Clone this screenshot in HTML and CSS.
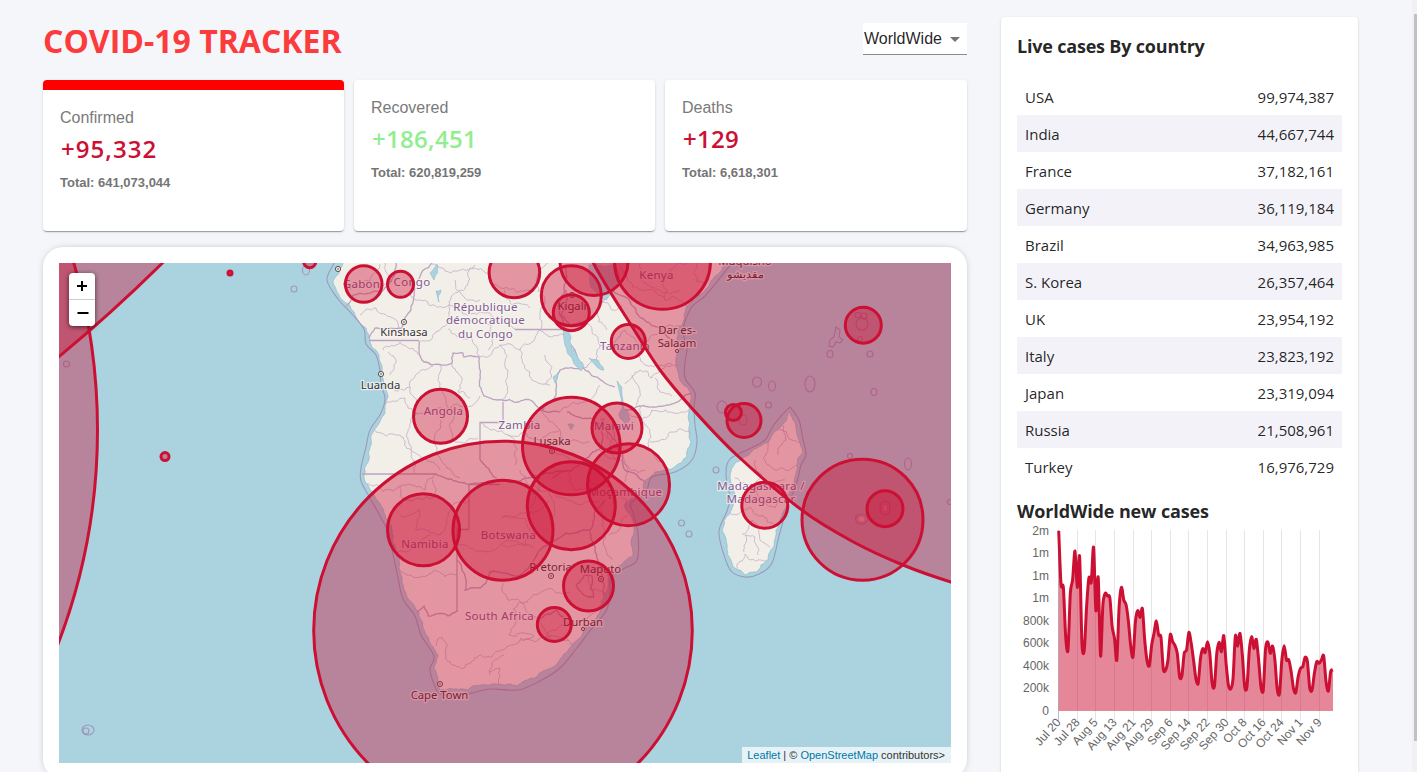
FILE: index.html
```html
<!DOCTYPE html>
<html lang="en">
<head>
<meta charset="utf-8">
<title>COVID-19 Tracker</title>
<link rel="stylesheet" href="styles.css">
</head>
<body>
<div class="app">
  <main class="left">
    <header class="header">
      <h1 class="title">COVID-19 TRACKER</h1>
      <div class="select"><span>WorldWide</span><svg class="caret" viewBox="0 0 24 24"><path d="M7 10l5 5 5-5z"/></svg></div>
    </header>
    <section class="stats">
      <div class="card stat stat-active"><p class="stat-label">Confirmed</p><p class="stat-num wide">+95,332</p><p class="stat-total">Total: 641,073,044</p></div>
      <div class="card stat"><p class="stat-label">Recovered</p><p class="stat-num green">+186,451</p><p class="stat-total">Total: 620,819,259</p></div>
      <div class="card stat"><p class="stat-label">Deaths</p><p class="stat-num">+129</p><p class="stat-total">Total: 6,618,301</p></div>
    </section>
    <section class="map-card">
      <div class="map">
        <svg id="map" class="map-svg" viewBox="59 263 892 500"></svg>
        <div class="zoom"><span class="zoom-btn"><svg viewBox="0 0 26 26"><path d="M8 13h10M13 8v10"/></svg></span><span class="zoom-btn"><svg viewBox="0 0 26 26"><path d="M8.500 13h11"/></svg></span></div>
        <div class="attribution"><a>Leaflet</a> | © <a>OpenStreetMap</a> contributors&gt;</div>
      </div>
    </section>
  </main>
  <aside class="card side">
    <h3 class="side-title">Live cases By country</h3>
    <div class="table">
      <div class="row"><span>USA</span><span>99,974,387</span></div>
      <div class="row"><span>India</span><span>44,667,744</span></div>
      <div class="row"><span>France</span><span>37,182,161</span></div>
      <div class="row"><span>Germany</span><span>36,119,184</span></div>
      <div class="row"><span>Brazil</span><span>34,963,985</span></div>
      <div class="row"><span>S. Korea</span><span>26,357,464</span></div>
      <div class="row"><span>UK</span><span>23,954,192</span></div>
      <div class="row"><span>Italy</span><span>23,823,192</span></div>
      <div class="row"><span>Japan</span><span>23,319,094</span></div>
      <div class="row"><span>Russia</span><span>21,508,961</span></div>
      <div class="row"><span>Turkey</span><span>16,976,729</span></div>
    </div>
    <h3 class="side-title chart-title">WorldWide new cases</h3>
    <svg id="chart" class="chart" viewBox="1017 524 325 236"></svg>
  </aside>
  <div class="scrollbar"><div class="thumb"></div></div>
</div>
<script src="app.js"></script>
</body>
</html>
```
FILE: styles.css
```css
* { box-sizing: border-box; }
html, body { margin: 0; height: 100%; overflow: hidden; }
body { background: #f5f6fa; font-family: "Open Sans", "Noto Sans", sans-serif; color: rgba(0,0,0,.87); }
p, h1, h3 { margin: 0; }
.app { position: relative; display: flex; align-items: flex-start; gap: 34px; height: 772px; padding: 17px 0 0 43px; overflow: hidden; }
.left { width: 924px; flex: none; }
.header { display: flex; justify-content: space-between; height: 63px; padding-top: 6px; }
.title { font-size: 32px; line-height: 35px; font-weight: 700; color: #fc3c3c; letter-spacing: 0; white-space: nowrap; }
.select { display: flex; align-items: center; width: 104px; height: 32px; padding-left: 1px; background: #fff; border-bottom: 1px solid #8b8b8d; font: 16px "Liberation Sans", Arial, sans-serif; white-space: nowrap; }
.caret { width: 24px; height: 24px; margin-left: 1px; fill: #757575; }
.card { background: #fff; border-radius: 4px; box-shadow: 0 2px 1px -1px rgba(0,0,0,.2), 0 1px 1px rgba(0,0,0,.14), 0 1px 3px rgba(0,0,0,.12); }
.stats { display: grid; grid-template-columns: 301px 301px 302px; gap: 10px; }
.stat { height: 151px; padding: 16px 16px 16px 17px; white-space: nowrap; overflow: hidden; }
.stat-active { border-top: 10px solid red; }
.stat-label { font: 16px/24px "Liberation Sans", Arial, sans-serif; color: #7a7a7a; }
.stat-num { margin: 3px 0 0 1px; font-size: 24px; font-weight: 600; line-height: 32px; color: #cc1034; letter-spacing: .3px; }
.wide { letter-spacing: 1.05px; }
.green { color: #90ee90; }
.stat-total { margin-top: 9px; font: bold 13px/18px "Liberation Sans", Arial, sans-serif; color: #757575; }
.map-card { margin-top: 16px; height: 532px; padding: 16px; background: #fff; border-radius: 20px; box-shadow: 0 0 8px -4px rgba(0,0,0,.5); }
.map { position: relative; height: 500px; overflow: hidden; background: #aad3df; }
.map-svg { display: block; width: 892px; height: 500px; font-family: "Noto Sans", sans-serif; }
.land { fill: #f2efe9; stroke: #8fb9c8; stroke-width: .7; }
.sea-limit { fill: none; stroke: #9a86b0; stroke-width: 1.1; opacity: .75; }
.border { fill: none; stroke: #bda3c1; stroke-width: 1.3; }
.region { fill: none; stroke: #c3adc7; stroke-width: .8; }
.lake { fill: #aad3df; stroke: #8aafc8; stroke-width: .5; }
.label { text-anchor: middle; font-size: 11.5px; fill: #815b8d; stroke: #f8f5f4; stroke-width: 2.5px; stroke-opacity: .75; stroke-linejoin: round; paint-order: stroke; letter-spacing: .3px; }
.city { font-size: 11.3px; fill: #333; letter-spacing: 0; }
.place { fill: #f2efe9; stroke: #444; stroke-width: .9; }
.bubble { fill: #cc1034; fill-opacity: .4; stroke: #cc1034; stroke-width: 3; }
.zoom { position: absolute; left: 10px; top: 10px; width: 26px; border-radius: 4px; background: #fff; box-shadow: 0 1px 5px rgba(0,0,0,.65); }
.zoom-btn { display: block; height: 26px; }
.zoom-btn + .zoom-btn { height: 27px; border-top: 1px solid #ccc; }
.zoom-btn svg { display: block; width: 26px; height: 26px; fill: none; stroke: #000; stroke-width: 2; }
.attribution { position: absolute; right: 0; bottom: 0; height: 16px; padding: 0 6px 0 5px; background: rgba(255,255,255,.7); font: 11px/16px "Liberation Sans", Arial, sans-serif; color: #333; white-space: nowrap; }
.attribution a { color: #0078a8; }
.side { width: 357px; height: 800px; padding: 16px; flex: none; }
.side-title { font-size: 18px; line-height: 26px; font-weight: 700; white-space: nowrap; letter-spacing: -.2px; }
.table { margin-top: 20px; }
.row { display: flex; justify-content: space-between; align-items: center; height: 37px; padding: 0 8px; font-size: 15px; line-height: 20px; }
.row:nth-child(even) { background: #f3f2f8; }
.table { margin-top: 19px; }
.chart-title { margin-top: 13px; height: 26px; letter-spacing: -.13px; }
.chart { display: block; width: 325px; height: 236px; font: 12px "Liberation Sans", Arial, sans-serif; fill: #666; }
.grid { stroke: rgba(0,0,0,.1); stroke-width: 1; }
.axis { stroke: rgba(0,0,0,.25); stroke-width: 1; }
.area { fill: rgba(204,16,52,.5); }
.line { fill: none; stroke: #cc1034; stroke-width: 3; stroke-linejoin: round; }
.end { text-anchor: end; }
.scrollbar { position: absolute; right: 0; top: 0; width: 5px; height: 772px; padding: 14px 0 0 2px; background: #f1f1f1; }
.thumb { width: 3px; height: 727px; background: #c1c1c1; }
```
FILE: app.js
```js
const NS = 'http://www.w3.org/2000/svg';
const map = document.getElementById('map');
const chart = document.getElementById('chart');

function add(parent, tag, attrs, text) {
  const el = document.createElementNS(NS, tag);
  for (const k in attrs) el.setAttribute(k, attrs[k]);
  if (text) el.textContent = text;
  parent.appendChild(el);
  return el;
}

function parse(s) {
  return s.trim().split(/\s+/).map(p => p.split(',').map(Number));
}

function smooth(pts, t) {
  let d = `M${pts[0]}`;
  for (let i = 0; i < pts.length - 1; i++) {
    const a = pts[i - 1] || pts[i], b = pts[i], c = pts[i + 1], e = pts[i + 2] || c;
    d += `C${b[0] + (c[0] - a[0]) * t},${b[1] + (c[1] - a[1]) * t} ${c[0] - (e[0] - b[0]) * t},${c[1] - (e[1] - b[1]) * t} ${c}`;
  }
  return d;
}

let seed = 7;
function rnd() { seed = (seed * 16807) % 2147483647; return seed / 2147483647 - .5; }

/* Midpoint displacement turns a coarse line into a natural looking boundary. */
function rough(pts, amp, min) {
  const out = [pts[0]];
  const split = (a, b) => {
    const dx = b[0] - a[0], dy = b[1] - a[1], l = Math.hypot(dx, dy);
    if (l < min) { out.push(b); return; }
    const k = rnd() * amp;
    const m = [(a[0] + b[0]) / 2 - dy * k, (a[1] + b[1]) / 2 + dx * k];
    split(a, m); split(m, b);
  };
  for (let i = 1; i < pts.length; i++) split(pts[i - 1], pts[i]);
  return 'M' + out.map(p => p[0].toFixed(1) + ',' + p[1].toFixed(1)).join('L');
}

const africa = '342,255 342,266 333,281 341,299 354,312 366,328 370,342 378,353 382,370 384,384 388,397 385,413 374,430 370,447 365,467 364,477 367,484 374,495 384,513 392,530 397,553 402,577 407,597 419,613 425,633 438,655 434,668 438,680 440,690 450,688 467,690 490,685 508,684 517,686 524,681 537,677 557,664 572,645 584,629 601,608 606,593 607,573 622,564 633,556 634,533 629,513 624,505 643,492 645,481 655,472 673,468 687,456 691,442 690,423 689,407 691,395 680,381 676,365 680,348 678,330 686,308 699,295 711,281 723,267 730,255';
const africaLimit = '334,255 334,263 327,280 338,299 352,314 364,329 366,344 376,355 380,371 381,385 385,398 381,413 370,430 366,447 361,468 361,481 370,498 380,516 388,532 393,554 398,578 403,599 415,616 421,635 434,656 430,669 434,684 441,694 467,694 490,689 518,690 540,681 560,668 576,649 589,632 606,611 610,594 611,577 625,568 637,560 638,534 633,513 631,503 646,492 652,477 675,472 692,460 697,442 695,425 694,406 695,393 685,378 685,362 687,348 683,330 691,308 704,297 716,283 731,264 738,255';
const madagascar = '790,412 795,423 799,440 803,453 798,458 795,477 787,497 776,530 768,560 757,572 745,575 733,567 727,550 722,530 730,513 735,500 730,477 736,462 753,450 768,443 777,430 787,418 790,412';
const madLimit = '790,407 799,420 803,440 806,455 801,465 797,482 790,500 780,532 772,563 759,574 745,577 731,571 723,552 719,531 727,511 730,497 726,475 730,459 751,448 765,440 773,426 783,414 790,407';
add(map, 'path', { d: rough(parse(africa), .22, 3), class: 'land' });
add(map, 'path', { d: rough(parse(madagascar), .25, 3), class: 'land' });
add(map, 'path', { d: smooth(parse(africaLimit), .16), class: 'sea-limit' });
add(map, 'path', { d: smooth(parse(madLimit), .16), class: 'sea-limit' });

/* Surveyed boundaries run straight. */
['M369 340.500H419', 'M480 460V422.500H503V402', 'M469 529V484.500H500', 'M457 612V529.500H469', 'M515 329.500H562', 'M362 474H436'].forEach(d =>
  add(map, 'path', { d, class: 'border' }));

const borders = [
  '419,341 424,362 432,365 452,363 453,353 463,353 464,357 479,357 480,375 484,396 502,400 530,400 541,410 560,412',
  '480,460 497,478', '436,474 448,479 500,481 540,475 566,471',
  '457,560 463,572 465,590 480,588 490,572 520,575 534,560 548,545 566,533 590,530 605,500',
  '417,612 424,606 428,616 448,616 457,611', '590,532 597,558 601,572 604,596',
  '566,265 560,300 563,324 575,350 583,368 560,370 556,395 542,411',
  '583,368 605,383 615,387', '625,410 640,406 667,405 691,393', '607,290 635,308 660,328 683,350',
  '369,338 375,328 402,328 411,310 418,280 432,263', '346,306 353,295 381,292 396,263',
  '567,412 590,418 615,440 625,470 645,482', '604,418 601,448 587,458 570,471 552,478',
  '538,622 545,615 556,610 566,620', '576,585 585,575 592,576 594,597', '594,597 584,595 576,585', '594,570 605,565', '570,325 561,315 566,290'
];
borders.forEach(b => add(map, 'path', { d: rough(parse(b), .25, 3), class: 'border' }));

const regions = [
  '383,350 400,342 430,365', '384,385 410,387 425,370 433,366', '386,403 405,398 417,414 450,409 480,396', '374,430 400,435 420,456 440,470',
  '410,387 416,414 408,440 414,473', '440,365 444,395 455,410 452,440 478,438', '441,420 437,455 460,478', '420,341 440,330 449,305 480,312 515,329',
  '475,265 468,285 449,305', '480,357 500,345 520,350 540,330 566,335', '502,400 508,370 500,345', '540,330 545,300 536,280 548,263',
  '520,350 532,380 550,385', '448,329 470,337 480,357', '432,264 450,273 475,268 490,282 535,290', '385,263 390,280 376,300',
  '350,290 370,281 380,264', '360,315 376,308 392,318 400,328', '367,484 400,486 425,490 436,474', '400,486 402,498 433,498 433,480',
  '400,515 420,510 416,530 440,535 450,510 470,500', '395,553 418,548 430,535', '398,568 413,577 457,575', '457,545 500,546 533,548',
  '502,546 526,546 526,520 502,517 548,500', '436,646 442,637 446,655 462,669 480,655 502,650 520,640 534,636',
  '534,636 509,635 515,624 513,609 520,602', '503,583 508,600 524,603 545,590 570,593', '520,602 535,617 550,638 569,640', '490,672 500,668 498,685',
  '490,675 492,665 504,655', '520,638 548,637 571,645', '545,640 552,630 570,628', '602,600 590,615 582,630',
  '606,593 590,590 585,570 594,570', '609,535 619,530 628,515', '600,510 605,530 612,560', '590,480 612,487 627,505',
  '520,470 530,485 548,490 550,520', '566,471 575,490 592,486', '540,475 535,500 528,520', '555,495 580,505 600,500',
  '560,412 590,400 600,385', '600,450 620,460 645,470', '625,384 640,370 652,378 672,365', '625,410 645,425 650,450 670,470',
  '650,442 670,432 691,434', '640,406 642,420 691,408', '583,368 600,345 625,330', '600,345 586,320 570,325',
  '610,290 596,310 607,330', '625,330 640,345 645,365', '645,365 678,365', '640,345 660,330 680,326',
  '619,267 640,290 665,300 687,306', '640,263 648,285 680,290', '697,263 697,282 710,280', '665,300 670,270 690,263',
  '542,411 560,430 563,445 590,442', '560,430 540,440 508,435 480,423', '508,435 515,465', '552,450 570,462',
  '600,418 613,430 619,460', '607,430 621,450 625,482', '735,478 755,487 785,480', '768,443 763,458 778,470 797,465',
  '777,430 792,440 801,443', '755,460 757,490 775,508 787,500', '730,513 750,507 775,525', '742,534 752,520 760,540 770,547',
  '737,570 745,554 756,561 766,560', '744,552 745,535 755,537 758,555', '783,425 786,440 778,455',
  '388,352 396,362 390,375', '452,363 462,378 458,392 470,398', '485,320 492,335 488,350', '545,355 552,368 545,385', '600,300 612,310 622,305',
  '632,375 640,390 636,405', '655,378 660,392 672,396', '505,290 512,305 530,308', '455,280 462,295 480,300', '410,295 425,300 449,305'
];
regions.forEach(b => add(map, 'path', { d: rough(parse(b), .42, 3), class: 'region' }));

[
  '563,328 568,330 570,341 576,354 584,366 581,371 573,361 567,351 564,340', '589,358 598,360 604,370 596,366',
  '617,381 622,388 626,411 630,420 625,424 619,415 621,398', '553,377 560,371 555,383',
  '589,265 616,263 616,286 606,300 598,295 590,285', '430,273 437,264 434,280', '436,291 441,290 439,302', '568,424 574,425 571,430'
].forEach(l => add(map, 'path', { d: rough(parse(l), .3, 3) + 'Z', class: 'lake' }));

[
  [294, 289, 3, 3], [306, 270, 3.500, 5], [66.500, 364, 3, 3], [716, 470, 3, 3], [681.500, 523, 3, 3], [689, 534, 3, 3],
  [757, 382, 4.500, 5], [772, 386, 3.500, 5], [810, 384, 5, 8], [830, 354, 3, 3.500], [870, 354, 3, 3], [874, 392, 3, 3.500],
  [768.500, 405, 3, 3], [862, 324, 6, 6], [858, 315, 3, 2.500], [864, 316, 3, 3], [860, 339, 2.500, 2.500], [722, 407, 5, 6],
  [743, 420, 4, 5], [850, 456, 2.500, 2.500], [908, 464, 3.500, 6], [885, 508, 5, 7], [861.500, 519, 6, 5], [950, 502, 2.500, 2.500],
  [88, 730, 6, 5], [86, 731, 3, 3]
].forEach(e => add(map, 'ellipse', { cx: e[0], cy: e[1], rx: e[2], ry: e[3], class: 'sea-limit' }));
add(map, 'ellipse', { cx: 861.5, cy: 519, rx: 3.5, ry: 3, class: 'land' });
add(map, 'ellipse', { cx: 885, cy: 508, rx: 2.5, ry: 4, class: 'land' });
add(map, 'path', { d: 'M836 327l4 3-1 7 4 3-3 3-4-1-3 5-4-1 1-6 4-3z', class: 'sea-limit' });

[
  ['Gabon', 361.500, 287.500], ['Congo', 412, 286], ['République', 485.500, 310.500], ['démocratique', 485.500, 324], ['du Congo', 485.500, 337.500],
  ['Tanzania', 625, 350], ['Angola', 443.500, 415], ['Zambia', 519.500, 429], ['Malawi', 614, 429.500], ['Kenya', 656.500, 279],
  ['Moçambique', 625.500, 495.500], ['Namibia', 425, 547.500], ['Botswana', 508.500, 539], ['South Africa', 499.500, 619.500],
  ['Madagasikara /', 761, 490], ['Madagascar', 761, 503]
].forEach(l => add(map, 'text', { x: l[1], y: l[2], class: 'label' }, l[0]));
[
  ['Kinshasa', 404, 336], ['Luanda', 380.500, 388.500], ['Kigali', 572, 309.500], ['Lusaka', 552, 444.500], ['Dar es-', 677, 334],
  ['Salaam', 677, 347], ['Muqdisho', 745, 265], ['مقديشو', 745.500, 277.500], ['Pretoria', 550.500, 570.500], ['Maputo', 600.500, 573],
  ['Durban', 583, 625.500], ['Cape Town', 439.500, 698.500]
].forEach(l => add(map, 'text', { x: l[1], y: l[2], class: 'label city' }, l[0]));
[[338, 269], [404, 322], [381, 374], [552, 451], [572, 295], [551, 576], [601, 579], [440, 684]].forEach(p => {
  add(map, 'circle', { cx: p[0], cy: p[1], r: 2.6, class: 'place' });
  add(map, 'circle', { cx: p[0], cy: p[1], r: .8, fill: '#444' });
});
[[677, 351], [583, 629]].forEach(p => add(map, 'circle', { cx: p[0], cy: p[1], r: 1.6, class: 'place' }));

const ocean = parse('560,190 593.3,263 633,328 660,370 691.7,408 736.7,455 801.7,510 853,541.7 903,565 951,582 1010,598');
add(map, 'path', { d: smooth(ocean, .16) + 'V190Z', class: 'bubble' });
add(map, 'path', { d: 'M215 209Q112 319 10 395V209Z', class: 'bubble' });
[
  [-502.500, 430, 600], [503, 630.500, 189.300], [363.700, 284, 18.300], [400.500, 284.300, 13], [514.400, 272.500, 25.300], [594, 261.500, 34], [571.300, 295.700, 30],
  [571.300, 312.700, 18], [628.300, 341.500, 17], [440.500, 416.300, 27], [571.300, 446, 48.800], [617, 428, 25], [628.500, 484.700, 41],
  [571.300, 505.700, 44], [503, 530.300, 50], [423.500, 529.800, 36], [588.500, 586, 25], [554.300, 624.500, 17], [662.500, 261.300, 48],
  [863.300, 325.200, 18], [744, 420.500, 17], [733.400, 412.500, 8], [764.800, 505.300, 23], [862.500, 519.700, 60.500], [885, 508.700, 18],
  [165, 456.600, 4], [230, 273, 2], [309.700, 261.700, 6]
].forEach(c => add(map, 'circle', { cx: c[0], cy: c[1], r: c[2], class: 'bubble' }));

/* Daily new cases, as heights below the top of the plot. */
const daily = [122,283,292,440,480,310,268,183,292,200,460,480,350,263,277,172,362,262,498,345,310,318,323,410,445,510,350,292,330,345,395,470,500,395,362,382,356,450,512,527,465,430,393,435,442,537,540,510,434,455,466,490,560,558,490,480,427,460,510,565,580,505,476,488,455,490,580,588,490,457,485,437,520,585,597,565,438,468,430,495,590,590,480,440,475,448,510,590,600,475,456,490,468,510,598,610,510,467,510,510,545,595,608,560,535,530,502,515,595,600,550,515,520,510,498,575,603,545,540];
const x0 = 1058.700, base = 710.700, step = 274.300 / 118;
const pts = daily.map((v, i) => [x0 + i * step, 490 + v / 3]);
const curve = smooth(pts, .14);
const dates = ['Jul 20', 'Jul 28', 'Aug 5', 'Aug 13', 'Aug 21', 'Aug 29', 'Sep 6', 'Sep 14', 'Sep 22', 'Sep 30', 'Oct 8', 'Oct 16', 'Oct 24', 'Nov 1', 'Nov 9'];
dates.forEach((t, i) => {
  const x = Math.round(x0 + i * 8 * step - .5) + .5;
  add(chart, 'path', { d: `M${x} 530V721`, class: i ? 'grid' : 'axis' });
  add(chart, 'text', { transform: `translate(${x} 720) rotate(-48)`, dy: 4, class: 'end' }, t);
});
add(chart, 'path', { d: curve + `V${base + .3}H${x0}Z`, class: 'area' });
add(chart, 'clipPath', { id: 'plot' });
add(chart.lastChild, 'rect', { x: 1057, y: 530.500, width: 276.500, height: 182 });
add(chart, 'path', { d: curve, class: 'line', 'clip-path': 'url(#plot)' });
['2m', '1m', '1m', '1m', '800k', '600k', '400k', '200k', '0'].forEach((t, i) =>
  add(chart, 'text', { x: 1049, y: 534.500 + i * 22.560, class: 'end' }, t));
```
